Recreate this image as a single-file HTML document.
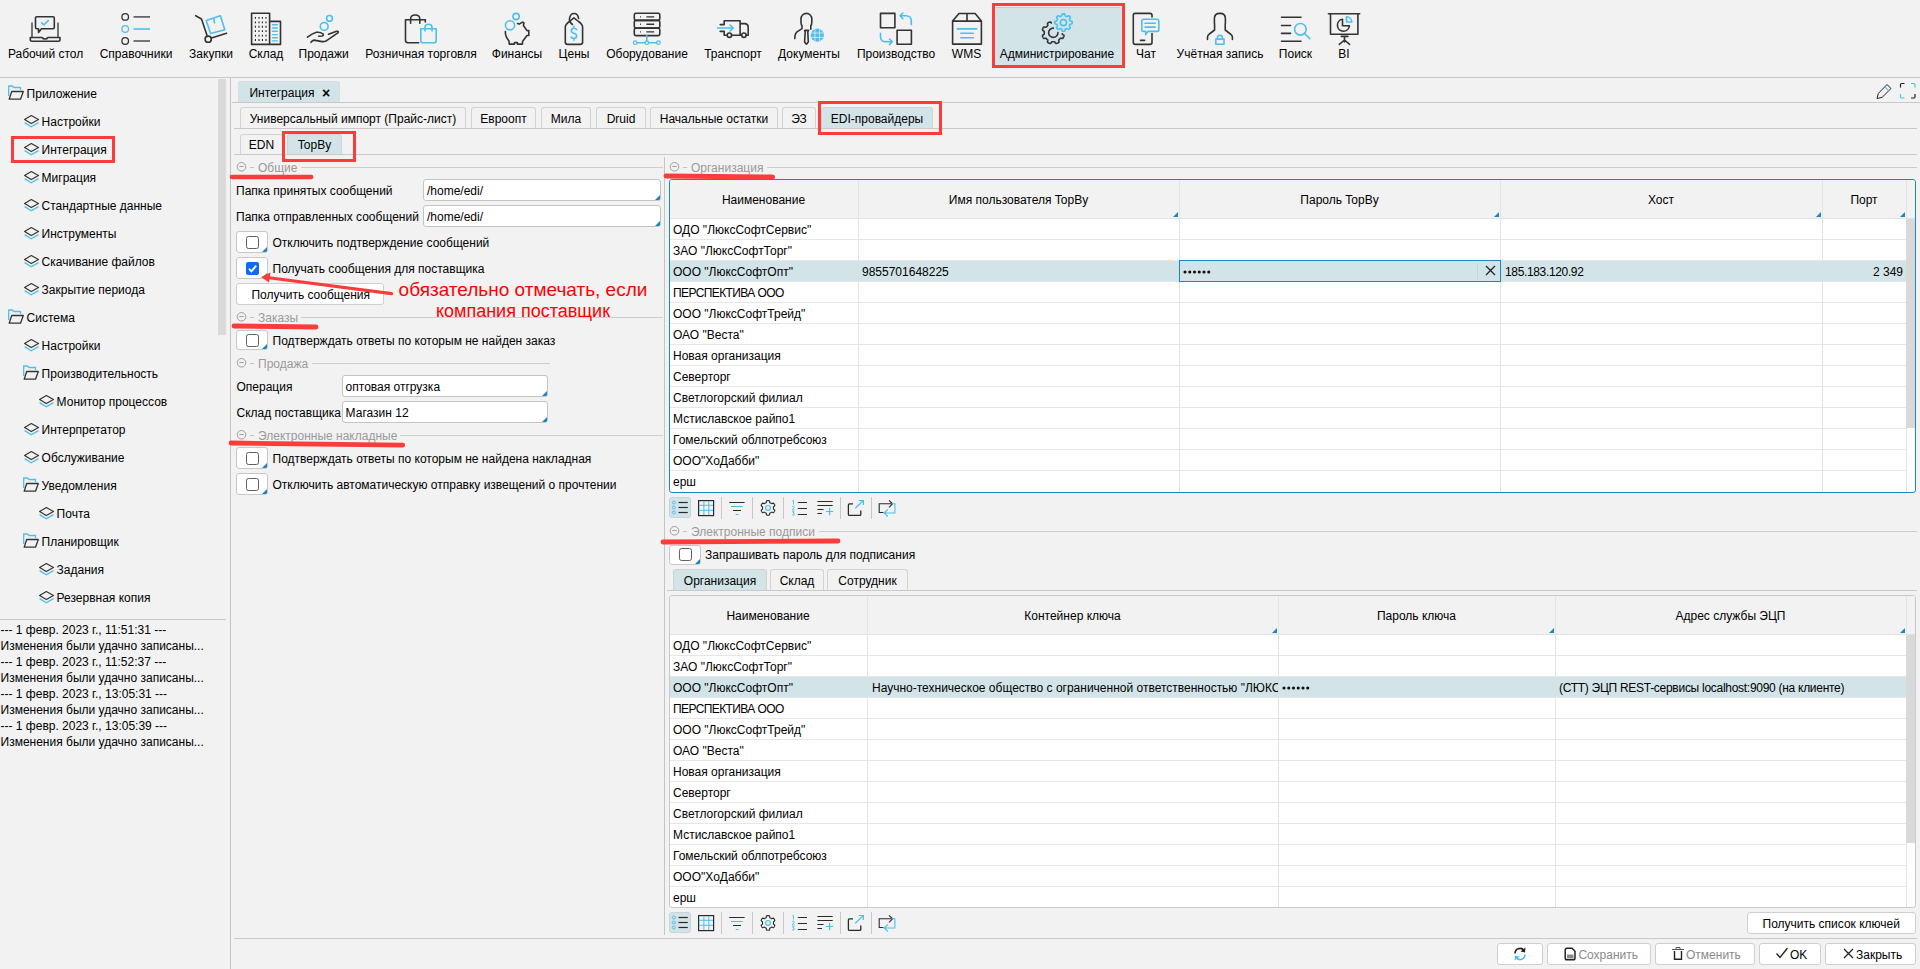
<!DOCTYPE html><html><head><meta charset="utf-8"><style>
html,body{margin:0;padding:0;width:1920px;height:969px;overflow:hidden;background:#f2f2f2;font-family:"Liberation Sans", sans-serif;}
.t{position:absolute;white-space:nowrap;}
.b{position:absolute;box-sizing:border-box;}
</style></head><body>
<div class="b" style="left:0px;top:77px;width:1920px;height:1px;background:#c8c8c8"></div>
<div class="b" style="left:994px;top:7px;width:128px;height:58px;background:#d3e4e9;border-radius:3px;border-top:1px solid #bfcdd2"></div>
<svg class="b" style="left:0;top:0" width="1400" height="60" viewBox="0 0 1400 60" fill="none"><path d="M32 22.5 V37.5 M58 22.5 V37.5" stroke="#555" stroke-width="1.6"/><path d="M30.3 37.5 H42 Q43 39 45 39 Q47 39 48 37.5 H60 V39.5 Q60 41.2 58.3 41.2 H32 Q30.3 41.2 30.3 39.5 Z" stroke="#333" stroke-width="1.6" fill="none" stroke-linejoin="round" stroke-linecap="round" stroke-width="1.4"/><path d="M36.8 16.7 H53 Q54.3 16.7 54.3 18 V27.5 Q54.3 28.8 53 28.8 H41.5 L38.5 32.5 V28.8 H36.8 Q35.5 28.8 35.5 27.5 V18 Q35.5 16.7 36.8 16.7 Z" stroke="#333" stroke-width="1.6" fill="none" stroke-linejoin="round" stroke-linecap="round" stroke-width="1.4"/><path d="M41.6 22.8 L43.9 24.9 L48.3 20.5" stroke="#4dbfee" stroke-width="1.6" fill="none" stroke-linejoin="round" stroke-linecap="round" stroke-width="1.3"/><circle cx="125.2" cy="16.9" r="3.3" stroke="#333" stroke-width="1.3"/><path d="M133.5 16.9 H150" stroke="#555" stroke-width="1.6"/><circle cx="125.2" cy="29" r="3.3" stroke="#4dbfee" stroke-width="1.3"/><path d="M133.5 29 H150" stroke="#4dbfee" stroke-width="1.6"/><circle cx="125.2" cy="41" r="3.3" stroke="#333" stroke-width="1.3"/><path d="M133.5 41 H150" stroke="#555" stroke-width="1.6"/><path d="M195.7 15.7 L201.5 19 L207.2 36" stroke="#333" stroke-width="1.6" fill="none" stroke-linejoin="round" stroke-linecap="round"/><circle cx="208.2" cy="39.2" r="3.1" stroke="#333" stroke-width="1.6" fill="none" stroke-linejoin="round" stroke-linecap="round"/><path d="M211.4 37.9 L226.5 33.3" stroke="#333" stroke-width="1.6" fill="none" stroke-linejoin="round" stroke-linecap="round"/><path d="M206.2 20.6 L220.4 15.7 L224.8 29.8 L210.6 33.6 Z" stroke="#4dbfee" stroke-width="1.6" fill="none" stroke-linejoin="round" stroke-linecap="round"/><path d="M213.6 18.7 L214.6 22.8" stroke="#4dbfee" stroke-width="1.6" fill="none" stroke-linejoin="round" stroke-linecap="round"/><path d="M251.6 13.3 H269.6 V44.4 H251.6 Z M269.6 21.4 H280.5 V44.4 H269.6" stroke="#333" stroke-width="1.6" fill="none" stroke-linejoin="round" stroke-linecap="round" stroke-width="1.7"/><path d="M255.4 17.0 V18.799999999999997 M259 17.0 V18.799999999999997 M262.4 17.0 V18.799999999999997 M266 17.0 V18.799999999999997 M255.4 21.400000000000002 V23.2 M259 21.400000000000002 V23.2 M262.4 21.400000000000002 V23.2 M266 21.400000000000002 V23.2 M255.4 25.85 V27.65 M259 25.85 V27.65 M262.4 25.85 V27.65 M266 25.85 V27.65 M255.4 30.3 V32.1 M259 30.3 V32.1 M262.4 30.3 V32.1 M266 30.3 V32.1 M255.4 34.7 V36.5 M259 34.7 V36.5 M262.4 34.7 V36.5 M266 34.7 V36.5 M255.4 39.1 V40.9 M259 39.1 V40.9 M262.4 39.1 V40.9 M266 39.1 V40.9 " stroke="#222" stroke-width="1.1"/><path d="M272.5 24.7 H277.3 M272.5 28 H277.3 M272.5 31.3 H277.3 M272.5 34.6 H277.3 M272.5 37.8 H277.3 M272.5 40.9 H277.3 " stroke="#4dbfee" stroke-width="1.4" stroke-linecap="round"/><circle cx="329.5" cy="18.4" r="2.9" stroke="#4dbfee" stroke-width="1.6" fill="none" stroke-linejoin="round" stroke-linecap="round" stroke-width="1.4"/><circle cx="324.2" cy="26.4" r="3.9" stroke="#4dbfee" stroke-width="1.6" fill="none" stroke-linejoin="round" stroke-linecap="round" stroke-width="1.4"/><path d="M307.5 37.2 Q312 33.5 316.5 32.3 Q320 31.8 323 33.8 Q324 35.5 322 36 L318.7 36.3" stroke="#333" stroke-width="1.6" fill="none" stroke-linejoin="round" stroke-linecap="round" stroke-width="1.4"/><path d="M328.5 34.2 L336.5 31.2 Q338.6 31 338.2 32.6 L325.5 41.3 Q324 41.8 322 41.6 L314 40.1 Q312.5 40.3 311 42.3" stroke="#333" stroke-width="1.6" fill="none" stroke-linejoin="round" stroke-linecap="round" stroke-width="1.4"/><path d="M418.7 42.8 H408 Q405.5 42.8 405.5 40.3 V19.8 H425.3 V22" stroke="#333" stroke-width="1.6" fill="none" stroke-linejoin="round" stroke-linecap="round" stroke-width="1.5"/><path d="M410.6 23.3 V19 Q410.6 15 415.2 15 Q419.8 15 419.8 19 V23.3" stroke="#333" stroke-width="1.6" fill="none" stroke-linejoin="round" stroke-linecap="round" stroke-width="1.5"/><path d="M420.8 28.8 H436.2 V40.5 Q436.2 42.8 434 42.8 H423 Q420.8 42.8 420.8 40.5 Z" stroke="#4dbfee" stroke-width="1.6" fill="none" stroke-linejoin="round" stroke-linecap="round" stroke-width="1.5"/><path d="M425 31 V27.5 Q425 24.2 428.5 24.2 Q432 24.2 432 27.5 V31" stroke="#4dbfee" stroke-width="1.6" fill="none" stroke-linejoin="round" stroke-linecap="round" stroke-width="1.5"/><circle cx="516.1" cy="16.5" r="3.1" stroke="#4dbfee" stroke-width="1.6" fill="none" stroke-linejoin="round" stroke-linecap="round" stroke-width="1.2"/><circle cx="510" cy="25.3" r="4.6" stroke="#4dbfee" stroke-width="1.6" fill="none" stroke-linejoin="round" stroke-linecap="round" stroke-width="1.3"/><path d="M505.3 31.5 Q505.3 37 509 41 L509.3 44.1 H514.5 V42.5 H517.3 V44.1 H522.5 V41.4 L527 35.5 H528.8 V30.6 H527 L523.5 25.7 L523.9 22.8 Q523.5 22.2 522 22.4 L519.2 24.1 L517.5 23.5" stroke="#333" stroke-width="1.6" fill="none" stroke-linejoin="round" stroke-linecap="round" stroke-width="1.3"/><path d="M569.5 21.5 L573.9 17.8 L578.5 21.5 Q582.6 24.5 582.6 27 V42 Q582.6 44.4 580.2 44.4 H567.7 Q565.3 44.4 565.3 42 V27 Q565.3 24.5 569.5 21.5 Z" stroke="#333" stroke-width="1.6" fill="none" stroke-linejoin="round" stroke-linecap="round" stroke-width="1.6"/><path d="M572.5 24.5 Q569 22 569.5 18.5 Q570.3 13.5 574 13.5 Q578 13.5 578.6 18.5" stroke="#333" stroke-width="1.6" fill="none" stroke-linejoin="round" stroke-linecap="round" stroke-width="1.5"/><path d="M576.8 29.6 Q575.8 28.2 573.9 28.2 Q571.3 28.2 571.3 30.6 Q571.3 32.6 573.9 33.2 Q576.6 33.8 576.6 36 Q576.6 38.4 573.9 38.4 Q571.8 38.4 571 37 M573.9 26.3 V28.2 M573.9 38.4 V40.3" stroke="#4dbfee" stroke-width="1.6" fill="none" stroke-linejoin="round" stroke-linecap="round" stroke-width="1.5"/><rect x="634.3" y="13.3" width="25.5" height="7.099999999999998" rx="1.6" stroke="#333" stroke-width="1.6" fill="none" stroke-linejoin="round" stroke-linecap="round" stroke-width="1.6"/><path d="M640 16.85 H640.9 M646.4 16.85 H654.2" stroke="#333" stroke-width="1.3"/><rect x="634.3" y="20.4" width="25.5" height="7.700000000000003" rx="1.6" stroke="#333" stroke-width="1.6" fill="none" stroke-linejoin="round" stroke-linecap="round" stroke-width="1.6"/><path d="M640 24.25 H640.9 M646.4 24.25 H654.2" stroke="#333" stroke-width="1.3"/><rect x="634.3" y="28.1" width="25.5" height="7.5" rx="1.6" stroke="#333" stroke-width="1.6" fill="none" stroke-linejoin="round" stroke-linecap="round" stroke-width="1.6"/><path d="M640 31.85 H640.9 M646.4 31.85 H654.2" stroke="#333" stroke-width="1.3"/><path d="M637 42.7 H644.9 M648.7 42.7 H656.6 M646.8 35.6 V40.8" stroke="#4dbfee" stroke-width="1.6" fill="none" stroke-linejoin="round" stroke-linecap="round" stroke-width="1.3"/><circle cx="635.2" cy="42.7" r="1.8" stroke="#4dbfee" stroke-width="1.2"/><circle cx="646.8" cy="42.7" r="1.8" stroke="#4dbfee" stroke-width="1.2"/><circle cx="658.4" cy="42.7" r="1.8" stroke="#4dbfee" stroke-width="1.2"/><path d="M720.2 24.6 H724.2 V20.8 H740.1 V35.2 M740.1 23.6 H744.5 Q748.2 23.6 748.2 27.4 V35.2 H746.2 M720.2 31.4 H724.2 V35.2 H727 M731.7 35.2 H741.5" stroke="#333" stroke-width="1.6" fill="none" stroke-linejoin="round" stroke-linecap="round" stroke-width="1.5"/><circle cx="729.4" cy="35.2" r="2.2" stroke="#333" stroke-width="1.6" fill="none" stroke-linejoin="round" stroke-linecap="round" stroke-width="1.5"/><circle cx="743.9" cy="35.2" r="2.2" stroke="#333" stroke-width="1.6" fill="none" stroke-linejoin="round" stroke-linecap="round" stroke-width="1.5"/><path d="M717.5 28 H733 M730 25 L733.3 28 L730 31" stroke="#4dbfee" stroke-width="1.6" fill="none" stroke-linejoin="round" stroke-linecap="round" stroke-width="1.7"/><path d="M802 28.6 V25.5 Q801 24.5 801 22.5 V18.8 A5.4 5.4 0 0 1 811.8 18.8 V22.5 Q811.8 24.5 810.8 25.5 V29.3 M802 28.6 L797 31.8 Q794.8 33.5 794.8 38.6" stroke="#333" stroke-width="1.6" fill="none" stroke-linejoin="round" stroke-linecap="round" stroke-width="1.5"/><path d="M804.6 30.4 L808.6 30.4 L807.8 32 L808.3 42 L806.4 44.2 L804.6 42 L805.2 32 Z" stroke="#333" stroke-width="1.6" fill="none" stroke-linejoin="round" stroke-linecap="round" stroke-width="1.3"/><circle cx="817.3" cy="35.2" r="6.6" fill="#4dbfee"/><path d="M811 33 H823.6 M811 37.4 H823.6 M815 29 V41.5 M819.6 29 V41.5" stroke="#f2f2f2" stroke-width="0.7"/><rect x="880.5" y="13.4" width="14.4" height="14.3" stroke="#333" stroke-width="1.6" fill="none" stroke-linejoin="round" stroke-linecap="round" stroke-width="1.6"/><rect x="897.1" y="30.2" width="14.3" height="14" stroke="#333" stroke-width="1.6" fill="none" stroke-linejoin="round" stroke-linecap="round" stroke-width="1.6"/><path d="M911.3 24.6 V21 Q911.3 15.8 905.7 15.8 H900 M902.8 13 L900 15.8 L902.8 18.6" stroke="#4dbfee" stroke-width="1.6" fill="none" stroke-linejoin="round" stroke-linecap="round" stroke-width="1.5"/><path d="M880.5 33.3 V36.5 Q880.5 41.8 886 41.8 H892.2 M889.5 39 L892.3 41.8 L889.5 44.6" stroke="#4dbfee" stroke-width="1.6" fill="none" stroke-linejoin="round" stroke-linecap="round" stroke-width="1.5"/><path d="M952.6 21.1 L959 13.5 H975.1 L981.4 21.1 V44.1 H952.6 Z M952.6 21.1 H981.4 M967 13.5 V21.1" stroke="#333" stroke-width="1.6" fill="none" stroke-linejoin="round" stroke-linecap="round" stroke-width="1.6"/><path d="M957.3 28.9 H976.7 M960.8 33.3 H973.3 M960.8 37.7 H973.3" stroke="#4dbfee" stroke-width="1.6" fill="none" stroke-linejoin="round" stroke-linecap="round" stroke-width="1.6"/><path d="M1062.22 33.69 L1062.24 33.95 L1062.39 34.22 L1062.91 34.58 L1063.63 35.02 L1063.97 35.40 L1064.00 35.73 L1063.95 36.03 L1063.86 36.33 L1063.76 36.62 L1063.65 36.91 L1063.53 37.20 L1063.40 37.48 L1063.26 37.76 L1063.11 38.03 L1062.93 38.28 L1062.66 38.47 L1062.10 38.47 L1061.27 38.26 L1060.70 38.17 L1060.42 38.28 L1060.24 38.45 L1060.07 38.63 L1059.90 38.82 L1059.73 39.00 L1059.55 39.17 L1059.38 39.34 L1059.19 39.51 L1059.01 39.68 L1058.83 39.86 L1058.69 40.09 L1058.70 40.54 L1058.91 41.34 L1059.00 42.02 L1058.85 42.36 L1058.61 42.56 L1058.35 42.72 L1058.07 42.86 L1057.79 42.99 L1057.51 43.11 L1057.22 43.22 L1056.93 43.33 L1056.63 43.42 L1056.33 43.49 L1056.01 43.50 L1055.65 43.29 L1055.22 42.66 L1054.83 42.01 L1054.53 41.76 L1054.27 41.72 L1054.03 41.72 L1053.78 41.74 L1053.53 41.75 L1053.28 41.75 L1053.03 41.75 L1052.78 41.74 L1052.54 41.73 L1052.29 41.72 L1052.03 41.74 L1051.75 41.92 L1051.38 42.47 L1050.95 43.18 L1050.57 43.48 L1050.24 43.50 L1049.94 43.44 L1049.65 43.35 L1049.35 43.25 L1049.06 43.14 L1048.78 43.02 L1048.50 42.89 L1048.22 42.75 L1047.95 42.60 L1047.70 42.42 L1047.52 42.13 L1047.54 41.54 L1047.76 40.71 L1047.82 40.17 L1047.71 39.91 L1047.54 39.72 L1047.35 39.55 L1047.17 39.39 L1046.99 39.22 L1046.81 39.04 L1046.64 38.86 L1046.47 38.68 L1046.31 38.49 L1046.13 38.32 L1045.88 38.19 L1045.40 38.21 L1044.59 38.43 L1043.94 38.49 L1043.62 38.33 L1043.43 38.09 L1043.27 37.82 L1043.13 37.55 L1043.00 37.27 L1042.88 36.98 L1042.77 36.69 L1042.66 36.40 L1042.57 36.11 L1042.51 35.81 L1042.51 35.49 L1042.74 35.12 L1043.40 34.69 L1044.03 34.30 L1044.24 34.01 L1044.28 33.75 L1044.27 33.50 L1044.26 33.26 L1044.25 33.01 L1044.25 32.76 L1044.25 32.51 L1044.26 32.26 L1044.27 32.01 L1044.28 31.77 L1044.25 31.51 L1044.06 31.22 L1043.46 30.85 L1042.78 30.41 L1042.51 30.04 L1042.50 29.72 L1042.57 29.42 L1042.66 29.12 L1042.76 28.83 L1042.87 28.54 L1042.99 28.26 L1043.12 27.98 L1043.26 27.70 L1043.41 27.43 L1043.60 27.18 L1043.91 27.01 L1044.53 27.05 L1045.35 27.27 L1045.86 27.32 L1046.11 27.20 L1046.29 27.02 L1046.46 26.84 L1046.63 26.65 L1046.80 26.47 L1046.97 26.30 L1047.15 26.13 L1047.34 25.96 L1047.52 25.79 L1047.70 25.61 L1047.82 25.36 L1047.77 24.85 L1047.55 24.02 L1047.51 23.41 L1047.68 23.10 L1047.93 22.91 L1048.20 22.76 L1048.48 22.62 L1048.76 22.49 L1049.04 22.37 L1049.33 22.26 L1049.62 22.16 L1049.92 22.07 L1050.22 22.00 L1050.54 22.01 L1050.91 22.28 L1051.35 22.97" stroke="#333" stroke-width="1.6" fill="none" stroke-linejoin="round" stroke-linecap="round" stroke-width="1.4"/><path d="M1053.4 28.1 A4.65 4.65 0 1 0 1057.9 32.6" stroke="#333" stroke-width="1.6" fill="none" stroke-linejoin="round" stroke-linecap="round" stroke-width="1.4"/><path d="M1072.15 22.55 L1072.14 22.89 L1072.12 23.23 L1072.05 23.57 L1071.82 23.88 L1071.05 24.06 L1070.28 24.19 L1070.03 24.41 L1069.92 24.65 L1069.83 24.90 L1069.73 25.15 L1069.63 25.40 L1069.52 25.64 L1069.42 25.89 L1069.44 26.22 L1069.89 26.86 L1070.30 27.53 L1070.25 27.91 L1070.06 28.20 L1069.84 28.45 L1069.60 28.70 L1069.35 28.94 L1069.10 29.16 L1068.81 29.35 L1068.43 29.40 L1067.76 28.99 L1067.12 28.54 L1066.79 28.52 L1066.54 28.62 L1066.30 28.73 L1066.05 28.83 L1065.80 28.93 L1065.55 29.02 L1065.31 29.13 L1065.09 29.38 L1064.96 30.15 L1064.78 30.92 L1064.47 31.15 L1064.13 31.22 L1063.79 31.24 L1063.45 31.25 L1063.11 31.24 L1062.77 31.22 L1062.43 31.15 L1062.12 30.92 L1061.94 30.15 L1061.81 29.38 L1061.59 29.13 L1061.35 29.02 L1061.10 28.93 L1060.85 28.83 L1060.60 28.73 L1060.36 28.62 L1060.11 28.52 L1059.78 28.54 L1059.14 28.99 L1058.47 29.40 L1058.09 29.35 L1057.80 29.16 L1057.55 28.94 L1057.30 28.70 L1057.06 28.45 L1056.84 28.20 L1056.65 27.91 L1056.60 27.53 L1057.01 26.86 L1057.46 26.22 L1057.48 25.89 L1057.38 25.64 L1057.27 25.40 L1057.17 25.15 L1057.07 24.90 L1056.98 24.65 L1056.87 24.41 L1056.62 24.19 L1055.85 24.06 L1055.08 23.88 L1054.85 23.57 L1054.78 23.23 L1054.76 22.89 L1054.75 22.55 L1054.76 22.21 L1054.78 21.87 L1054.85 21.53 L1055.08 21.22 L1055.85 21.04 L1056.62 20.91 L1056.87 20.69 L1056.98 20.45 L1057.07 20.20 L1057.17 19.95 L1057.27 19.70 L1057.38 19.46 L1057.48 19.21 L1057.46 18.88 L1057.01 18.24 L1056.60 17.57 L1056.65 17.19 L1056.84 16.90 L1057.06 16.65 L1057.30 16.40 L1057.55 16.16 L1057.80 15.94 L1058.09 15.75 L1058.47 15.70 L1059.14 16.11 L1059.78 16.56 L1060.11 16.58 L1060.36 16.48 L1060.60 16.37 L1060.85 16.27 L1061.10 16.17 L1061.35 16.08 L1061.59 15.97 L1061.81 15.72 L1061.94 14.95 L1062.12 14.18 L1062.43 13.95 L1062.77 13.88 L1063.11 13.86 L1063.45 13.85 L1063.79 13.86 L1064.13 13.88 L1064.47 13.95 L1064.78 14.18 L1064.96 14.95 L1065.09 15.72 L1065.31 15.97 L1065.55 16.08 L1065.80 16.17 L1066.05 16.27 L1066.30 16.37 L1066.54 16.48 L1066.79 16.58 L1067.12 16.56 L1067.76 16.11 L1068.43 15.70 L1068.81 15.75 L1069.10 15.94 L1069.35 16.16 L1069.60 16.40 L1069.84 16.65 L1070.06 16.90 L1070.25 17.19 L1070.30 17.57 L1069.89 18.24 L1069.44 18.88 L1069.42 19.21 L1069.52 19.46 L1069.63 19.70 L1069.73 19.95 L1069.83 20.20 L1069.92 20.45 L1070.03 20.69 L1070.28 20.91 L1071.05 21.04 L1071.82 21.22 L1072.05 21.53 L1072.12 21.87 L1072.14 22.21 L1072.15 22.55 Z" stroke="#4dbfee" stroke-width="1.6" fill="none" stroke-linejoin="round" stroke-linecap="round" stroke-width="1.2"/><circle cx="1063.45" cy="22.55" r="3.1" stroke="#4dbfee" stroke-width="1.6" fill="none" stroke-linejoin="round" stroke-linecap="round" stroke-width="1.2"/><path d="M1152 16.9 V15.3 Q1152 13.4 1150 13.4 H1135.3 Q1133.3 13.4 1133.3 15.3 V42.5 Q1133.3 44.4 1135.3 44.4 H1150 Q1152 44.4 1152 42.5 V33.5 M1140.5 40.4 H1144.6" stroke="#333" stroke-width="1.6" fill="none" stroke-linejoin="round" stroke-linecap="round" stroke-width="1.6"/><path d="M1143.5 19.3 H1157 Q1158.8 19.3 1158.8 21 V29.7 Q1158.8 31.4 1157 31.4 H1148 L1145.7 34.6 V31.4 H1143.5 Q1141.8 31.4 1141.8 29.7 V21 Q1141.8 19.3 1143.5 19.3 Z" stroke="#4dbfee" stroke-width="1.6" fill="none" stroke-linejoin="round" stroke-linecap="round" stroke-width="1.5"/><path d="M1145 23.2 H1155.2 M1145 27.1 H1155.2" stroke="#4dbfee" stroke-width="1.6" fill="none" stroke-linejoin="round" stroke-linecap="round" stroke-width="1.4"/><path d="M1207.5 39.5 V37 Q1207.5 35 1210 33.5 L1214.6 30 V25 Q1214.4 24 1214.4 21 V18.5 Q1214.4 13.4 1219.9 13.4 Q1225.4 13.4 1225.4 18.5 V21 Q1225.4 24 1225.2 25 V30 L1229.8 33.5 Q1232.4 35 1232.4 37 V39.5" stroke="#333" stroke-width="1.6" fill="none" stroke-linejoin="round" stroke-linecap="round" stroke-width="1.5"/><rect x="1215.8" y="39.1" width="8.2" height="5.2" stroke="#4dbfee" stroke-width="1.6" fill="none" stroke-linejoin="round" stroke-linecap="round" stroke-width="1.4"/><path d="M1217.5 39 V37.5 Q1217.5 35.2 1219.9 35.2 Q1222.3 35.2 1222.3 37.5 V39" stroke="#4dbfee" stroke-width="1.6" fill="none" stroke-linejoin="round" stroke-linecap="round" stroke-width="1.4"/><path d="M1281.5 17.2 H1301 M1281.5 25.5 H1290.5 M1281.5 33.4 H1290.5 M1281.5 41.2 H1301" stroke="#333" stroke-width="1.6" fill="none" stroke-linejoin="round" stroke-linecap="round" stroke-width="1.5"/><circle cx="1300.4" cy="29.3" r="5.8" stroke="#4dbfee" stroke-width="1.6" fill="none" stroke-linejoin="round" stroke-linecap="round" stroke-width="1.5"/><path d="M1304.6 33.5 L1309.8 38.6" stroke="#4dbfee" stroke-width="1.6" fill="none" stroke-linejoin="round" stroke-linecap="round" stroke-width="1.5"/><path d="M1328.4 13.7 H1359.7 M1330.5 13.7 V34.2 H1357.9 V13.7 M1341.3 36.4 H1347.9 M1344.5 36.4 V42 M1339.3 44.3 L1344.5 40 L1349.6 44.3" stroke="#333" stroke-width="1.6" fill="none" stroke-linejoin="round" stroke-linecap="round" stroke-width="1.6"/><path d="M1342.5 19.3 A6 6 0 1 0 1349.4 25.8 H1342.5 Z" stroke="#333" stroke-width="1.6" fill="none" stroke-linejoin="round" stroke-linecap="round" stroke-width="1.5"/><path d="M1346.5 16.8 A5.5 5.5 0 0 1 1351.8 22 H1346.5 Z" stroke="#4dbfee" stroke-width="1.6" fill="none" stroke-linejoin="round" stroke-linecap="round" stroke-width="1.4"/></svg>
<div class="t" style="left:-254.4px;width:600px;text-align:center;top:47px;font-size:12px;line-height:14px;color:#000;">Рабочий стол</div>
<div class="t" style="left:-164px;width:600px;text-align:center;top:47px;font-size:12px;line-height:14px;color:#000;">Справочники</div>
<div class="t" style="left:-89px;width:600px;text-align:center;top:47px;font-size:12px;line-height:14px;color:#000;">Закупки</div>
<div class="t" style="left:-34px;width:600px;text-align:center;top:47px;font-size:12px;line-height:14px;color:#000;">Склад</div>
<div class="t" style="left:23.600000000000023px;width:600px;text-align:center;top:47px;font-size:12px;line-height:14px;color:#000;">Продажи</div>
<div class="t" style="left:121px;width:600px;text-align:center;top:47px;font-size:12px;line-height:14px;color:#000;">Розничная торговля</div>
<div class="t" style="left:217px;width:600px;text-align:center;top:47px;font-size:12px;line-height:14px;color:#000;">Финансы</div>
<div class="t" style="left:274px;width:600px;text-align:center;top:47px;font-size:12px;line-height:14px;color:#000;">Цены</div>
<div class="t" style="left:347px;width:600px;text-align:center;top:47px;font-size:12px;line-height:14px;color:#000;">Оборудование</div>
<div class="t" style="left:433px;width:600px;text-align:center;top:47px;font-size:12px;line-height:14px;color:#000;">Транспорт</div>
<div class="t" style="left:509px;width:600px;text-align:center;top:47px;font-size:12px;line-height:14px;color:#000;">Документы</div>
<div class="t" style="left:596px;width:600px;text-align:center;top:47px;font-size:12px;line-height:14px;color:#000;">Производство</div>
<div class="t" style="left:666.5px;width:600px;text-align:center;top:47px;font-size:12px;line-height:14px;color:#000;">WMS</div>
<div class="t" style="left:757px;width:600px;text-align:center;top:47px;font-size:12px;line-height:14px;color:#000;">Администрирование</div>
<div class="t" style="left:846px;width:600px;text-align:center;top:47px;font-size:12px;line-height:14px;color:#000;">Чат</div>
<div class="t" style="left:920px;width:600px;text-align:center;top:47px;font-size:12px;line-height:14px;color:#000;">Учётная запись</div>
<div class="t" style="left:995.5px;width:600px;text-align:center;top:47px;font-size:12px;line-height:14px;color:#000;">Поиск</div>
<div class="t" style="left:1044px;width:600px;text-align:center;top:47px;font-size:12px;line-height:14px;color:#000;">BI</div>
<div class="b" style="left:992px;top:3px;width:133px;height:65px;border:3px solid #fc3b3b"></div>
<div class="b" style="left:230px;top:78px;width:1px;height:891px;background:#c4c4c4"></div>
<div class="b" style="left:218px;top:79px;width:8px;height:256px;background:#d9d9d9"></div>
<div class="t" style="left:26.6px;top:87px;font-size:12px;line-height:14px;color:#000;">Приложение</div>
<svg class="b" style="left:8px;top:85px" width="16" height="16" viewBox="0 0 16 16" fill="none"><path d="M0.7 11 V1 H4.5 L5.8 2.5 H12.5 V5" stroke="#4dbfee" stroke-width="1.3"/><path d="M3.7 6.5 H15.3 L12.5 14.2 H1.2 Z" stroke="#333" stroke-width="1.3" stroke-linejoin="round"/></svg>
<div class="t" style="left:41.6px;top:115px;font-size:12px;line-height:14px;color:#000;">Настройки</div>
<svg class="b" style="left:23.5px;top:114px" width="16" height="14" viewBox="0 0 16 14" fill="none"><path d="M0.6 5.6 L7.3 1.6 L14.5 5.6 L7.3 9.6 Z" stroke="#333" stroke-width="1.2" stroke-linejoin="round"/><path d="M0.6 8.6 L7.3 12.8 L14.5 8.6" stroke="#4dbfee" stroke-width="1.3"/></svg>
<div class="t" style="left:41.6px;top:143px;font-size:12px;line-height:14px;color:#000;">Интеграция</div>
<svg class="b" style="left:23.5px;top:142px" width="16" height="14" viewBox="0 0 16 14" fill="none"><path d="M0.6 5.6 L7.3 1.6 L14.5 5.6 L7.3 9.6 Z" stroke="#333" stroke-width="1.2" stroke-linejoin="round"/><path d="M0.6 8.6 L7.3 12.8 L14.5 8.6" stroke="#4dbfee" stroke-width="1.3"/></svg>
<div class="t" style="left:41.6px;top:171px;font-size:12px;line-height:14px;color:#000;">Миграция</div>
<svg class="b" style="left:23.5px;top:170px" width="16" height="14" viewBox="0 0 16 14" fill="none"><path d="M0.6 5.6 L7.3 1.6 L14.5 5.6 L7.3 9.6 Z" stroke="#333" stroke-width="1.2" stroke-linejoin="round"/><path d="M0.6 8.6 L7.3 12.8 L14.5 8.6" stroke="#4dbfee" stroke-width="1.3"/></svg>
<div class="t" style="left:41.6px;top:199px;font-size:12px;line-height:14px;color:#000;">Стандартные данные</div>
<svg class="b" style="left:23.5px;top:198px" width="16" height="14" viewBox="0 0 16 14" fill="none"><path d="M0.6 5.6 L7.3 1.6 L14.5 5.6 L7.3 9.6 Z" stroke="#333" stroke-width="1.2" stroke-linejoin="round"/><path d="M0.6 8.6 L7.3 12.8 L14.5 8.6" stroke="#4dbfee" stroke-width="1.3"/></svg>
<div class="t" style="left:41.6px;top:227px;font-size:12px;line-height:14px;color:#000;">Инструменты</div>
<svg class="b" style="left:23.5px;top:226px" width="16" height="14" viewBox="0 0 16 14" fill="none"><path d="M0.6 5.6 L7.3 1.6 L14.5 5.6 L7.3 9.6 Z" stroke="#333" stroke-width="1.2" stroke-linejoin="round"/><path d="M0.6 8.6 L7.3 12.8 L14.5 8.6" stroke="#4dbfee" stroke-width="1.3"/></svg>
<div class="t" style="left:41.6px;top:255px;font-size:12px;line-height:14px;color:#000;">Скачивание файлов</div>
<svg class="b" style="left:23.5px;top:254px" width="16" height="14" viewBox="0 0 16 14" fill="none"><path d="M0.6 5.6 L7.3 1.6 L14.5 5.6 L7.3 9.6 Z" stroke="#333" stroke-width="1.2" stroke-linejoin="round"/><path d="M0.6 8.6 L7.3 12.8 L14.5 8.6" stroke="#4dbfee" stroke-width="1.3"/></svg>
<div class="t" style="left:41.6px;top:283px;font-size:12px;line-height:14px;color:#000;">Закрытие периода</div>
<svg class="b" style="left:23.5px;top:282px" width="16" height="14" viewBox="0 0 16 14" fill="none"><path d="M0.6 5.6 L7.3 1.6 L14.5 5.6 L7.3 9.6 Z" stroke="#333" stroke-width="1.2" stroke-linejoin="round"/><path d="M0.6 8.6 L7.3 12.8 L14.5 8.6" stroke="#4dbfee" stroke-width="1.3"/></svg>
<div class="t" style="left:26.6px;top:311px;font-size:12px;line-height:14px;color:#000;">Система</div>
<svg class="b" style="left:8px;top:309px" width="16" height="16" viewBox="0 0 16 16" fill="none"><path d="M0.7 11 V1 H4.5 L5.8 2.5 H12.5 V5" stroke="#4dbfee" stroke-width="1.3"/><path d="M3.7 6.5 H15.3 L12.5 14.2 H1.2 Z" stroke="#333" stroke-width="1.3" stroke-linejoin="round"/></svg>
<div class="t" style="left:41.6px;top:339px;font-size:12px;line-height:14px;color:#000;">Настройки</div>
<svg class="b" style="left:23.5px;top:338px" width="16" height="14" viewBox="0 0 16 14" fill="none"><path d="M0.6 5.6 L7.3 1.6 L14.5 5.6 L7.3 9.6 Z" stroke="#333" stroke-width="1.2" stroke-linejoin="round"/><path d="M0.6 8.6 L7.3 12.8 L14.5 8.6" stroke="#4dbfee" stroke-width="1.3"/></svg>
<div class="t" style="left:41.6px;top:367px;font-size:12px;line-height:14px;color:#000;">Производительность</div>
<svg class="b" style="left:23px;top:365px" width="16" height="16" viewBox="0 0 16 16" fill="none"><path d="M0.7 11 V1 H4.5 L5.8 2.5 H12.5 V5" stroke="#4dbfee" stroke-width="1.3"/><path d="M3.7 6.5 H15.3 L12.5 14.2 H1.2 Z" stroke="#333" stroke-width="1.3" stroke-linejoin="round"/></svg>
<div class="t" style="left:56.6px;top:395px;font-size:12px;line-height:14px;color:#000;">Монитор процессов</div>
<svg class="b" style="left:38.5px;top:394px" width="16" height="14" viewBox="0 0 16 14" fill="none"><path d="M0.6 5.6 L7.3 1.6 L14.5 5.6 L7.3 9.6 Z" stroke="#333" stroke-width="1.2" stroke-linejoin="round"/><path d="M0.6 8.6 L7.3 12.8 L14.5 8.6" stroke="#4dbfee" stroke-width="1.3"/></svg>
<div class="t" style="left:41.6px;top:423px;font-size:12px;line-height:14px;color:#000;">Интерпретатор</div>
<svg class="b" style="left:23.5px;top:422px" width="16" height="14" viewBox="0 0 16 14" fill="none"><path d="M0.6 5.6 L7.3 1.6 L14.5 5.6 L7.3 9.6 Z" stroke="#333" stroke-width="1.2" stroke-linejoin="round"/><path d="M0.6 8.6 L7.3 12.8 L14.5 8.6" stroke="#4dbfee" stroke-width="1.3"/></svg>
<div class="t" style="left:41.6px;top:451px;font-size:12px;line-height:14px;color:#000;">Обслуживание</div>
<svg class="b" style="left:23.5px;top:450px" width="16" height="14" viewBox="0 0 16 14" fill="none"><path d="M0.6 5.6 L7.3 1.6 L14.5 5.6 L7.3 9.6 Z" stroke="#333" stroke-width="1.2" stroke-linejoin="round"/><path d="M0.6 8.6 L7.3 12.8 L14.5 8.6" stroke="#4dbfee" stroke-width="1.3"/></svg>
<div class="t" style="left:41.6px;top:479px;font-size:12px;line-height:14px;color:#000;">Уведомления</div>
<svg class="b" style="left:23px;top:477px" width="16" height="16" viewBox="0 0 16 16" fill="none"><path d="M0.7 11 V1 H4.5 L5.8 2.5 H12.5 V5" stroke="#4dbfee" stroke-width="1.3"/><path d="M3.7 6.5 H15.3 L12.5 14.2 H1.2 Z" stroke="#333" stroke-width="1.3" stroke-linejoin="round"/></svg>
<div class="t" style="left:56.6px;top:507px;font-size:12px;line-height:14px;color:#000;">Почта</div>
<svg class="b" style="left:38.5px;top:506px" width="16" height="14" viewBox="0 0 16 14" fill="none"><path d="M0.6 5.6 L7.3 1.6 L14.5 5.6 L7.3 9.6 Z" stroke="#333" stroke-width="1.2" stroke-linejoin="round"/><path d="M0.6 8.6 L7.3 12.8 L14.5 8.6" stroke="#4dbfee" stroke-width="1.3"/></svg>
<div class="t" style="left:41.6px;top:535px;font-size:12px;line-height:14px;color:#000;">Планировщик</div>
<svg class="b" style="left:23px;top:533px" width="16" height="16" viewBox="0 0 16 16" fill="none"><path d="M0.7 11 V1 H4.5 L5.8 2.5 H12.5 V5" stroke="#4dbfee" stroke-width="1.3"/><path d="M3.7 6.5 H15.3 L12.5 14.2 H1.2 Z" stroke="#333" stroke-width="1.3" stroke-linejoin="round"/></svg>
<div class="t" style="left:56.6px;top:563px;font-size:12px;line-height:14px;color:#000;">Задания</div>
<svg class="b" style="left:38.5px;top:562px" width="16" height="14" viewBox="0 0 16 14" fill="none"><path d="M0.6 5.6 L7.3 1.6 L14.5 5.6 L7.3 9.6 Z" stroke="#333" stroke-width="1.2" stroke-linejoin="round"/><path d="M0.6 8.6 L7.3 12.8 L14.5 8.6" stroke="#4dbfee" stroke-width="1.3"/></svg>
<div class="t" style="left:56.6px;top:591px;font-size:12px;line-height:14px;color:#000;">Резервная копия</div>
<svg class="b" style="left:38.5px;top:590px" width="16" height="14" viewBox="0 0 16 14" fill="none"><path d="M0.6 5.6 L7.3 1.6 L14.5 5.6 L7.3 9.6 Z" stroke="#333" stroke-width="1.2" stroke-linejoin="round"/><path d="M0.6 8.6 L7.3 12.8 L14.5 8.6" stroke="#4dbfee" stroke-width="1.3"/></svg>
<div class="b" style="left:11px;top:136px;width:104px;height:27px;border:3px solid #fc3b3b"></div>
<div class="b" style="left:0px;top:619px;width:226px;height:1px;background:#c8c8c8"></div>
<div class="t" style="left:0.5px;top:623px;font-size:12px;line-height:14px;color:#000;">--- 1 февр. 2023 г., 11:51:31 ---</div>
<div class="t" style="left:0.5px;top:639px;font-size:12px;line-height:14px;color:#000;">Изменения были удачно записаны...</div>
<div class="t" style="left:0.5px;top:655px;font-size:12px;line-height:14px;color:#000;">--- 1 февр. 2023 г., 11:52:37 ---</div>
<div class="t" style="left:0.5px;top:671px;font-size:12px;line-height:14px;color:#000;">Изменения были удачно записаны...</div>
<div class="t" style="left:0.5px;top:687px;font-size:12px;line-height:14px;color:#000;">--- 1 февр. 2023 г., 13:05:31 ---</div>
<div class="t" style="left:0.5px;top:703px;font-size:12px;line-height:14px;color:#000;">Изменения были удачно записаны...</div>
<div class="t" style="left:0.5px;top:719px;font-size:12px;line-height:14px;color:#000;">--- 1 февр. 2023 г., 13:05:39 ---</div>
<div class="t" style="left:0.5px;top:735px;font-size:12px;line-height:14px;color:#000;">Изменения были удачно записаны...</div>
<div class="b" style="left:238px;top:81px;width:102px;height:22px;background:#d3e4e9;border:1px solid #d6dfe2;border-bottom:none;border-radius:3px 3px 0 0"></div>
<div class="t" style="left:249.4px;top:86px;font-size:12px;line-height:14px;color:#000;">Интеграция</div>
<div class="t" style="left:322px;top:86px;font-size:14px;line-height:14px;color:#000;font-weight:bold;">×</div>
<div class="b" style="left:232px;top:102px;width:1688px;height:1px;background:#c9c9c9"></div>
<svg class="b" style="left:1875px;top:82px" width="18" height="18" viewBox="0 0 18 18" fill="none"><path d="M2 16.5 L3.3 11.5 L12 2.5 L16 6.5 L7.2 15.3 Z" stroke="#222" stroke-width="1" stroke-linejoin="round"/><path d="M9.8 4.8 L13.8 8.8" stroke="#4dbfee" stroke-width="1.1"/></svg>
<svg class="b" style="left:1899px;top:82px" width="18" height="18" viewBox="0 0 18 18" fill="none"><path d="M1.5 5.5 V2.8 Q1.5 1.5 2.8 1.5 H5.5" stroke="#222" stroke-width="1.2"/><path d="M12 1.5 H14.7 Q16 1.5 16 2.8 V5.5" stroke="#4dbfee" stroke-width="1.2"/><path d="M1.5 12 V14.7 Q1.5 16 2.8 16 H5.5" stroke="#4dbfee" stroke-width="1.2"/><path d="M12 16 H14.7 Q16 16 16 14.7 V12" stroke="#222" stroke-width="1.2"/></svg>
<div class="b" style="left:240px;top:107px;width:226px;height:22px;background:#f2f2f2;border:1px solid #d2d2d2;border-bottom:none;border-radius:3px 3px 0 0"></div>
<div class="t" style="left:53.0px;width:600px;text-align:center;top:112px;font-size:12px;line-height:14px;color:#000;">Универсальный импорт (Прайс-лист)</div>
<div class="b" style="left:471px;top:107px;width:65px;height:22px;background:#f2f2f2;border:1px solid #d2d2d2;border-bottom:none;border-radius:3px 3px 0 0"></div>
<div class="t" style="left:203.5px;width:600px;text-align:center;top:112px;font-size:12px;line-height:14px;color:#000;">Евроопт</div>
<div class="b" style="left:541px;top:107px;width:50px;height:22px;background:#f2f2f2;border:1px solid #d2d2d2;border-bottom:none;border-radius:3px 3px 0 0"></div>
<div class="t" style="left:266.0px;width:600px;text-align:center;top:112px;font-size:12px;line-height:14px;color:#000;">Мила</div>
<div class="b" style="left:596px;top:107px;width:50px;height:22px;background:#f2f2f2;border:1px solid #d2d2d2;border-bottom:none;border-radius:3px 3px 0 0"></div>
<div class="t" style="left:321.0px;width:600px;text-align:center;top:112px;font-size:12px;line-height:14px;color:#000;">Druid</div>
<div class="b" style="left:650px;top:107px;width:128px;height:22px;background:#f2f2f2;border:1px solid #d2d2d2;border-bottom:none;border-radius:3px 3px 0 0"></div>
<div class="t" style="left:414.0px;width:600px;text-align:center;top:112px;font-size:12px;line-height:14px;color:#000;">Начальные остатки</div>
<div class="b" style="left:782px;top:107px;width:34px;height:22px;background:#f2f2f2;border:1px solid #d2d2d2;border-bottom:none;border-radius:3px 3px 0 0"></div>
<div class="t" style="left:499.0px;width:600px;text-align:center;top:112px;font-size:12px;line-height:14px;color:#000;">ЭЗ</div>
<div class="b" style="left:821px;top:107px;width:112px;height:22px;background:#d3e4e9;border:1px solid #d2d2d2;border-bottom:none;border-radius:3px 3px 0 0"></div>
<div class="t" style="left:577.0px;width:600px;text-align:center;top:112px;font-size:12px;line-height:14px;color:#000;">EDI-провайдеры</div>
<div class="b" style="left:234px;top:128px;width:1683px;height:1px;background:#c9c9c9"></div>
<div class="b" style="left:818px;top:101px;width:124px;height:34px;border:3px solid #fc3b3b"></div>
<div class="b" style="left:240px;top:134px;width:43px;height:21px;background:#f2f2f2;border:1px solid #d2d2d2;border-bottom:none;border-radius:3px 3px 0 0"></div>
<div class="t" style="left:-38.5px;width:600px;text-align:center;top:138px;font-size:12px;line-height:14px;color:#000;">EDN</div>
<div class="b" style="left:287px;top:134px;width:55px;height:21px;background:#d3e4e9;border:1px solid #d2d2d2;border-bottom:none;border-radius:3px 3px 0 0"></div>
<div class="t" style="left:14.5px;width:600px;text-align:center;top:138px;font-size:12px;line-height:14px;color:#000;">TopBy</div>
<div class="b" style="left:234px;top:154px;width:1683px;height:1px;background:#c9c9c9"></div>
<div class="b" style="left:282px;top:131px;width:74px;height:31px;border:3px solid #fc3b3b"></div>
<svg class="b" style="left:236px;top:161px" width="12" height="12" viewBox="0 0 12 12" fill="none"><circle cx="5.5" cy="5.8" r="4.3" stroke="#8a8a8a" stroke-width="0.8"/><path d="M3.3 5.5 H7.7" stroke="#8a8a8a" stroke-width="0.8"/></svg>
<div class="b" style="left:250px;top:167px;width:4px;height:1px;background:#c4c4c4"></div>
<div class="t" style="left:258px;top:161px;font-size:12px;line-height:14px;color:#9a9a9a;">Общие</div>
<div class="b" style="left:301px;top:167px;width:362px;height:1px;background:#cdcdcd"></div>
<div class="t" style="left:236px;top:184px;font-size:12px;line-height:14px;color:#000;">Папка принятых сообщений</div>
<div class="b" style="left:423px;top:179px;width:238px;height:22px;background:#fff;border:1px solid #c4c4c4;border-radius:3px"></div>
<svg class="b" style="left:655px;top:195px" width="5" height="5" viewBox="0 0 5 5" fill="none"><path d="M5 0 V3.5 Q5 5 3.5 5 H0 Z" fill="#1a87c4"/></svg>
<div class="t" style="left:427px;top:184px;font-size:12px;line-height:14px;color:#000;">/home/edi/</div>
<div class="t" style="left:236px;top:210px;font-size:12px;line-height:14px;color:#000;">Папка отправленных сообщений</div>
<div class="b" style="left:423px;top:205px;width:238px;height:22px;background:#fff;border:1px solid #c4c4c4;border-radius:3px"></div>
<svg class="b" style="left:655px;top:221px" width="5" height="5" viewBox="0 0 5 5" fill="none"><path d="M5 0 V3.5 Q5 5 3.5 5 H0 Z" fill="#1a87c4"/></svg>
<div class="t" style="left:427px;top:210px;font-size:12px;line-height:14px;color:#000;">/home/edi/</div>
<div class="b" style="left:236px;top:231px;width:32px;height:22px;background:#fff;border:1px solid #c8c8c8;border-radius:3px"></div>
<svg class="b" style="left:262px;top:247px" width="5" height="5" viewBox="0 0 5 5" fill="none"><path d="M5 0 V3.5 Q5 5 3.5 5 H0 Z" fill="#1a87c4"/></svg>
<div class="b" style="left:246px;top:236px;width:13px;height:13px;background:#fff;border:1.2px solid #606060;border-radius:2.5px"></div>
<div class="t" style="left:272.5px;top:236px;font-size:12px;line-height:14px;color:#000;">Отключить подтверждение сообщений</div>
<div class="b" style="left:236px;top:257px;width:32px;height:22px;background:#fff;border:1px solid #c8c8c8;border-radius:3px"></div>
<svg class="b" style="left:262px;top:273px" width="5" height="5" viewBox="0 0 5 5" fill="none"><path d="M5 0 V3.5 Q5 5 3.5 5 H0 Z" fill="#1a87c4"/></svg>
<div class="b" style="left:246px;top:262px;width:13px;height:13px;background:#0b6cfb;border-radius:2px"></div>
<svg class="b" style="left:246px;top:262px" width="13" height="13" viewBox="0 0 13 13" fill="none"><path d="M3 6.8 L5.5 9.3 L10.2 3.6" stroke="#fff" stroke-width="1.9" fill="none"/></svg>
<div class="t" style="left:272.5px;top:262px;font-size:12px;line-height:14px;color:#000;">Получать сообщения для поставщика</div>
<div class="b" style="left:236px;top:283px;width:148px;height:22px;background:#fff;border:1px solid #cfcfcf;border-radius:3px"></div>
<div class="t" style="left:251.4px;top:288px;font-size:12px;line-height:14px;color:#000;">Получить сообщения</div>
<svg class="b" style="left:236px;top:311px" width="12" height="12" viewBox="0 0 12 12" fill="none"><circle cx="5.5" cy="5.8" r="4.3" stroke="#8a8a8a" stroke-width="0.8"/><path d="M3.3 5.5 H7.7" stroke="#8a8a8a" stroke-width="0.8"/></svg>
<div class="b" style="left:250px;top:317px;width:4px;height:1px;background:#c4c4c4"></div>
<div class="t" style="left:258px;top:311px;font-size:12px;line-height:14px;color:#9a9a9a;">Заказы</div>
<div class="b" style="left:301px;top:317px;width:362px;height:1px;background:#cdcdcd"></div>
<div class="b" style="left:236px;top:330px;width:32px;height:20px;background:#fff;border:1px solid #c8c8c8;border-radius:3px"></div>
<svg class="b" style="left:262px;top:344px" width="5" height="5" viewBox="0 0 5 5" fill="none"><path d="M5 0 V3.5 Q5 5 3.5 5 H0 Z" fill="#1a87c4"/></svg>
<div class="b" style="left:246px;top:334px;width:13px;height:13px;background:#fff;border:1.2px solid #606060;border-radius:2.5px"></div>
<div class="t" style="left:272.5px;top:334px;font-size:12px;line-height:14px;color:#000;">Подтверждать ответы по которым не найден заказ</div>
<svg class="b" style="left:236px;top:357px" width="12" height="12" viewBox="0 0 12 12" fill="none"><circle cx="5.5" cy="5.8" r="4.3" stroke="#8a8a8a" stroke-width="0.8"/><path d="M3.3 5.5 H7.7" stroke="#8a8a8a" stroke-width="0.8"/></svg>
<div class="b" style="left:250px;top:363px;width:4px;height:1px;background:#c4c4c4"></div>
<div class="t" style="left:258px;top:357px;font-size:12px;line-height:14px;color:#9a9a9a;">Продажа</div>
<div class="b" style="left:312px;top:363px;width:238px;height:1px;background:#cdcdcd"></div>
<div class="t" style="left:236.5px;top:380px;font-size:12px;line-height:14px;color:#000;">Операция</div>
<div class="b" style="left:342px;top:375px;width:206px;height:22px;background:#fff;border:1px solid #c4c4c4;border-radius:3px"></div>
<svg class="b" style="left:542px;top:391px" width="5" height="5" viewBox="0 0 5 5" fill="none"><path d="M5 0 V3.5 Q5 5 3.5 5 H0 Z" fill="#1a87c4"/></svg>
<div class="t" style="left:345.6px;top:380px;font-size:12px;line-height:14px;color:#000;">оптовая отгрузка</div>
<div class="t" style="left:236.5px;top:406px;font-size:12px;line-height:14px;color:#000;">Склад поставщика</div>
<div class="b" style="left:342px;top:401px;width:206px;height:22px;background:#fff;border:1px solid #c4c4c4;border-radius:3px"></div>
<svg class="b" style="left:542px;top:417px" width="5" height="5" viewBox="0 0 5 5" fill="none"><path d="M5 0 V3.5 Q5 5 3.5 5 H0 Z" fill="#1a87c4"/></svg>
<div class="t" style="left:345.6px;top:406px;font-size:12px;line-height:14px;color:#000;">Магазин 12</div>
<svg class="b" style="left:236px;top:429px" width="12" height="12" viewBox="0 0 12 12" fill="none"><circle cx="5.5" cy="5.8" r="4.3" stroke="#8a8a8a" stroke-width="0.8"/><path d="M3.3 5.5 H7.7" stroke="#8a8a8a" stroke-width="0.8"/></svg>
<div class="b" style="left:250px;top:435px;width:4px;height:1px;background:#c4c4c4"></div>
<div class="t" style="left:258px;top:429px;font-size:12px;line-height:14px;color:#9a9a9a;">Электронные накладные</div>
<div class="b" style="left:400px;top:435px;width:263px;height:1px;background:#cdcdcd"></div>
<div class="b" style="left:236px;top:447px;width:32px;height:22px;background:#fff;border:1px solid #c8c8c8;border-radius:3px"></div>
<svg class="b" style="left:262px;top:463px" width="5" height="5" viewBox="0 0 5 5" fill="none"><path d="M5 0 V3.5 Q5 5 3.5 5 H0 Z" fill="#1a87c4"/></svg>
<div class="b" style="left:246px;top:452px;width:13px;height:13px;background:#fff;border:1.2px solid #606060;border-radius:2.5px"></div>
<div class="t" style="left:272.5px;top:452px;font-size:12px;line-height:14px;color:#000;">Подтверждать ответы по которым не найдена накладная</div>
<div class="b" style="left:236px;top:473px;width:32px;height:22px;background:#fff;border:1px solid #c8c8c8;border-radius:3px"></div>
<svg class="b" style="left:262px;top:489px" width="5" height="5" viewBox="0 0 5 5" fill="none"><path d="M5 0 V3.5 Q5 5 3.5 5 H0 Z" fill="#1a87c4"/></svg>
<div class="b" style="left:246px;top:478px;width:13px;height:13px;background:#fff;border:1.2px solid #606060;border-radius:2.5px"></div>
<div class="t" style="left:272.5px;top:478px;font-size:12px;line-height:14px;color:#000;">Отключить автоматическую отправку извещений о прочтении</div>
<div class="t" style="left:373px;width:300px;text-align:center;top:279px;font-size:19px;line-height:22px;color:#ff0000">обязательно отмечать, если</div>
<div class="t" style="left:373px;width:300px;text-align:center;top:300px;font-size:18px;line-height:22px;color:#ff0000">компания поставщик</div>
<svg class="b" style="left:255px;top:269px" width="140" height="30" viewBox="0 0 140 30" fill="none"><path d="M136.5 24.7 L12 8.5" stroke="#fc3b3b" stroke-width="3.2" stroke-linecap="round"/><path d="M6 8 L15.5 3.5 L14 13.5 Z" fill="#fc3b3b"/></svg>
<div class="b" style="left:664px;top:157px;width:1px;height:778px;background:#c4c4c4"></div>
<svg class="b" style="left:669px;top:161px" width="12" height="12" viewBox="0 0 12 12" fill="none"><circle cx="5.5" cy="5.8" r="4.3" stroke="#8a8a8a" stroke-width="0.8"/><path d="M3.3 5.5 H7.7" stroke="#8a8a8a" stroke-width="0.8"/></svg>
<div class="b" style="left:683px;top:167px;width:4px;height:1px;background:#c4c4c4"></div>
<div class="t" style="left:691px;top:161px;font-size:12px;line-height:14px;color:#9a9a9a;">Организация</div>
<div class="b" style="left:767px;top:167px;width:1150px;height:1px;background:#cdcdcd"></div>
<div class="b" style="left:669px;top:179px;width:1247px;height:314px;background:#fff;border:1px solid #1a87c4;border-radius:3px"></div>
<div class="b" style="left:670px;top:180px;width:1245px;height:38px;background:#f2f2f2;border-radius:2px 2px 0 0"></div>
<div class="b" style="left:670px;top:218px;width:1245px;height:1px;background:#e2e2e2"></div>
<div class="b" style="left:858px;top:180px;width:1px;height:312px;background:#e4e4e4"></div>
<div class="b" style="left:1179px;top:180px;width:1px;height:312px;background:#e4e4e4"></div>
<div class="b" style="left:1500px;top:180px;width:1px;height:312px;background:#e4e4e4"></div>
<div class="b" style="left:1822px;top:180px;width:1px;height:312px;background:#e4e4e4"></div>
<div class="b" style="left:1906px;top:180px;width:1px;height:312px;background:#e4e4e4"></div>
<div class="t" style="left:463.5px;width:600px;text-align:center;top:193px;font-size:12px;line-height:14px;color:#000;">Наименование</div>
<div class="t" style="left:718.5px;width:600px;text-align:center;top:193px;font-size:12px;line-height:14px;color:#000;">Имя пользователя TopBy</div>
<svg class="b" style="left:1173px;top:212px" width="5" height="5" viewBox="0 0 5 5" fill="none"><path d="M5 0 V5 H0 Z" fill="#1a87c4"/></svg>
<div class="t" style="left:1039.5px;width:600px;text-align:center;top:193px;font-size:12px;line-height:14px;color:#000;">Пароль TopBy</div>
<svg class="b" style="left:1494px;top:212px" width="5" height="5" viewBox="0 0 5 5" fill="none"><path d="M5 0 V5 H0 Z" fill="#1a87c4"/></svg>
<div class="t" style="left:1361.0px;width:600px;text-align:center;top:193px;font-size:12px;line-height:14px;color:#000;">Хост</div>
<svg class="b" style="left:1816px;top:212px" width="5" height="5" viewBox="0 0 5 5" fill="none"><path d="M5 0 V5 H0 Z" fill="#1a87c4"/></svg>
<div class="t" style="left:1564.0px;width:600px;text-align:center;top:193px;font-size:12px;line-height:14px;color:#000;">Порт</div>
<svg class="b" style="left:1900px;top:212px" width="5" height="5" viewBox="0 0 5 5" fill="none"><path d="M5 0 V5 H0 Z" fill="#1a87c4"/></svg>
<div class="t" style="left:673px;top:223px;font-size:12px;line-height:14px;color:#000;">ОДО &quot;ЛюксСофтСервис&quot;</div>
<div class="b" style="left:670px;top:239px;width:1236px;height:1px;background:#e6e6e6"></div>
<div class="t" style="left:673px;top:244px;font-size:12px;line-height:14px;color:#000;">ЗАО &quot;ЛюксСофтТорг&quot;</div>
<div class="b" style="left:670px;top:260px;width:1236px;height:1px;background:#e6e6e6"></div>
<div class="b" style="left:670px;top:261px;width:1236px;height:20px;background:#d3e4e9"></div>
<div class="t" style="left:673px;top:265px;font-size:12px;line-height:14px;color:#000;">ООО &quot;ЛюксСофтОпт&quot;</div>
<div class="b" style="left:670px;top:281px;width:1236px;height:1px;background:#e6e6e6"></div>
<div class="t" style="left:673px;top:286px;font-size:12px;line-height:14px;color:#000;letter-spacing:-0.6px;">ПЕРСПЕКТИВА ООО</div>
<div class="b" style="left:670px;top:302px;width:1236px;height:1px;background:#e6e6e6"></div>
<div class="t" style="left:673px;top:307px;font-size:12px;line-height:14px;color:#000;">ООО &quot;ЛюксСофтТрейд&quot;</div>
<div class="b" style="left:670px;top:323px;width:1236px;height:1px;background:#e6e6e6"></div>
<div class="t" style="left:673px;top:328px;font-size:12px;line-height:14px;color:#000;">ОАО &quot;Веста&quot;</div>
<div class="b" style="left:670px;top:344px;width:1236px;height:1px;background:#e6e6e6"></div>
<div class="t" style="left:673px;top:349px;font-size:12px;line-height:14px;color:#000;">Новая организация</div>
<div class="b" style="left:670px;top:365px;width:1236px;height:1px;background:#e6e6e6"></div>
<div class="t" style="left:673px;top:370px;font-size:12px;line-height:14px;color:#000;">Северторг</div>
<div class="b" style="left:670px;top:386px;width:1236px;height:1px;background:#e6e6e6"></div>
<div class="t" style="left:673px;top:391px;font-size:12px;line-height:14px;color:#000;">Светлогорский филиал</div>
<div class="b" style="left:670px;top:407px;width:1236px;height:1px;background:#e6e6e6"></div>
<div class="t" style="left:673px;top:412px;font-size:12px;line-height:14px;color:#000;">Мстиславское райпо1</div>
<div class="b" style="left:670px;top:428px;width:1236px;height:1px;background:#e6e6e6"></div>
<div class="t" style="left:673px;top:433px;font-size:12px;line-height:14px;color:#000;">Гомельский облпотребсоюз</div>
<div class="b" style="left:670px;top:449px;width:1236px;height:1px;background:#e6e6e6"></div>
<div class="t" style="left:673px;top:454px;font-size:12px;line-height:14px;color:#000;">ООО&quot;ХоДабби&quot;</div>
<div class="b" style="left:670px;top:470px;width:1236px;height:1px;background:#e6e6e6"></div>
<div class="t" style="left:673px;top:475px;font-size:12px;line-height:14px;color:#000;">ерш</div>
<div class="b" style="left:1906px;top:219px;width:9px;height:209px;background:#d9d9d9"></div>
<div class="t" style="left:862px;top:265px;font-size:12px;line-height:14px;color:#000;">9855701648225</div>
<div class="b" style="left:1179px;top:260px;width:322px;height:22px;border:1px solid #1a87c4;background:#d3e4e9"></div>
<svg class="b" style="left:1183px;top:269px" width="30" height="6" viewBox="0 0 30 6" fill="none"><circle cx="2.0" cy="3" r="1.55" fill="#111"/><circle cx="6.75" cy="3" r="1.55" fill="#111"/><circle cx="11.5" cy="3" r="1.55" fill="#111"/><circle cx="16.25" cy="3" r="1.55" fill="#111"/><circle cx="21.0" cy="3" r="1.55" fill="#111"/><circle cx="25.75" cy="3" r="1.55" fill="#111"/></svg>
<div class="b" style="left:1477px;top:263px;width:1px;height:16px;background:#c8d4d8"></div>
<svg class="b" style="left:1485px;top:265px" width="11" height="11" viewBox="0 0 11 11" fill="none"><path d="M1 1 L10 10 M10 1 L1 10" stroke="#222" stroke-width="1.3"/></svg>
<div class="t" style="left:1505px;top:265px;font-size:12px;line-height:14px;color:#000;letter-spacing:-0.35px;">185.183.120.92</div>
<div class="t" style="left:1303px;width:600px;text-align:right;top:265px;font-size:12px;line-height:14px;color:#000;">2 349</div>
<div class="b" style="left:669px;top:497px;width:22px;height:21px;background:#d3e4e9;border:1px solid #c5d5da;border-radius:3px"></div>
<div class="b" style="left:721px;top:497px;width:1px;height:22px;background:#c8c8c8"></div>
<div class="b" style="left:752px;top:497px;width:1px;height:22px;background:#c8c8c8"></div>
<div class="b" style="left:783px;top:497px;width:1px;height:22px;background:#c8c8c8"></div>
<div class="b" style="left:840px;top:497px;width:1px;height:22px;background:#c8c8c8"></div>
<div class="b" style="left:871px;top:497px;width:1px;height:22px;background:#c8c8c8"></div>
<svg class="b" style="left:660px;top:492px" width="240" height="30" viewBox="660 492 240 30" fill="none"><circle cx="673.8" cy="502.5" r="1.5" stroke="#4dbfee" stroke-width="1"/><path d="M678.5 502.5 H687.8" stroke="#2a2a2a" stroke-width="1.2"/><circle cx="673.8" cy="507.5" r="1.5" stroke="#4dbfee" stroke-width="1"/><path d="M678.5 507.5 H687.8" stroke="#2a2a2a" stroke-width="1.2"/><circle cx="673.8" cy="512.5" r="1.5" stroke="#4dbfee" stroke-width="1"/><path d="M678.5 512.5 H687.8" stroke="#2a2a2a" stroke-width="1.2"/><rect x="698.6" y="500.6" width="15" height="15" stroke="#2a2a2a" stroke-width="1.2"/><path d="M703.9 501.2 V515 M708.8 501.2 V515 M699.2 505.3 H713 M699.2 510.3 H713" stroke="#4dbfee" stroke-width="1"/><path d="M729.3 502.5 H744.6 M733 510.5 H741" stroke="#2a2a2a" stroke-width="1.1"/><path d="M731 506.5 H742.7 M735.7 514.5 H738.4" stroke="#4dbfee" stroke-width="1.1"/><path d="M773.50 507.90 L773.49 508.19 L773.47 508.48 L773.45 508.76 L773.52 509.07 L774.18 509.56 L774.81 510.11 L774.80 510.51 L774.67 510.87 L774.50 511.21 L774.32 511.55 L774.12 511.88 L773.90 512.19 L773.66 512.48 L773.32 512.69 L772.53 512.43 L771.77 512.09 L771.47 512.19 L771.23 512.35 L771.00 512.51 L770.75 512.66 L770.50 512.80 L770.24 512.93 L769.98 513.05 L769.74 513.26 L769.66 514.08 L769.49 514.90 L769.14 515.09 L768.76 515.16 L768.38 515.19 L768.00 515.20 L767.62 515.19 L767.24 515.16 L766.86 515.09 L766.51 514.90 L766.34 514.08 L766.26 513.26 L766.02 513.05 L765.76 512.93 L765.50 512.80 L765.25 512.66 L765.00 512.51 L764.77 512.35 L764.53 512.19 L764.23 512.09 L763.47 512.43 L762.68 512.69 L762.34 512.48 L762.10 512.19 L761.88 511.88 L761.68 511.55 L761.50 511.21 L761.33 510.87 L761.20 510.51 L761.19 510.11 L761.82 509.56 L762.48 509.07 L762.55 508.76 L762.53 508.48 L762.51 508.19 L762.50 507.90 L762.51 507.61 L762.53 507.32 L762.55 507.04 L762.48 506.73 L761.82 506.24 L761.19 505.69 L761.20 505.29 L761.33 504.93 L761.50 504.59 L761.68 504.25 L761.88 503.92 L762.10 503.61 L762.34 503.32 L762.68 503.11 L763.47 503.37 L764.23 503.71 L764.53 503.61 L764.77 503.45 L765.00 503.29 L765.25 503.14 L765.50 503.00 L765.76 502.87 L766.02 502.75 L766.26 502.54 L766.34 501.72 L766.51 500.90 L766.86 500.71 L767.24 500.64 L767.62 500.61 L768.00 500.60 L768.38 500.61 L768.76 500.64 L769.14 500.71 L769.49 500.90 L769.66 501.72 L769.74 502.54 L769.98 502.75 L770.24 502.87 L770.50 503.00 L770.75 503.14 L771.00 503.29 L771.23 503.45 L771.47 503.61 L771.77 503.71 L772.53 503.37 L773.32 503.11 L773.66 503.32 L773.90 503.61 L774.12 503.92 L774.32 504.25 L774.50 504.59 L774.67 504.93 L774.80 505.29 L774.81 505.69 L774.18 506.24 L773.52 506.73 L773.45 507.04 L773.47 507.32 L773.49 507.61 L773.50 507.90 Z" stroke="#2a2a2a" stroke-width="1.1" stroke-linejoin="round"/><circle cx="768" cy="507.9" r="2.4" stroke="#4dbfee" stroke-width="1.2"/><path d="M792.2 501.2 L793.5 500.3 V504.5" stroke="#4dbfee" stroke-width="0.9"/><path d="M792 506.6 Q793.3 505.6 794.3 506.6 Q794.6 507.5 792 510 H794.5" stroke="#4dbfee" stroke-width="0.9"/><path d="M792 511.8 H794.2 L793 513 Q794.8 513.3 794.2 514.8 Q793.3 515.5 792 514.9" stroke="#4dbfee" stroke-width="0.9"/><path d="M797.8 502.5 H807 M797.8 508.5 H807 M797.8 514.5 H807" stroke="#2a2a2a" stroke-width="1.1"/><path d="M817.4 501.5 H832.7 M817.4 505.5 H832.7 M817.4 509.5 H823.5 M817.4 513.5 H822" stroke="#2a2a2a" stroke-width="1.1"/><path d="M829.6 507.8 V515.2 M825.9 511.5 H833.3" stroke="#4dbfee" stroke-width="1.2"/><path d="M853 503.9 H849.4 Q848.4 503.9 848.4 504.9 V514.4 Q848.4 515.4 849.4 515.4 H859.8 Q860.8 515.4 860.8 514.4 V510.5" stroke="#2a2a2a" stroke-width="1.3"/><path d="M855.3 508.2 L863.3 500.5 M858.8 500.5 H863.4 V505" stroke="#4dbfee" stroke-width="1.2"/><path d="M883.5 512.5 H879.2 V503.8 H892.5 M889 500.3 L892.6 503.8 L889 507.3" stroke="#2a2a2a" stroke-width="1.1"/><path d="M891.4 503.8 H894.9 V513 H884.3 M887.8 509.5 L884.2 513 L887.8 516.5" stroke="#4dbfee" stroke-width="1.1"/></svg>
<svg class="b" style="left:669px;top:525px" width="12" height="12" viewBox="0 0 12 12" fill="none"><circle cx="5.5" cy="5.8" r="4.3" stroke="#8a8a8a" stroke-width="0.8"/><path d="M3.3 5.5 H7.7" stroke="#8a8a8a" stroke-width="0.8"/></svg>
<div class="b" style="left:683px;top:531px;width:4px;height:1px;background:#c4c4c4"></div>
<div class="t" style="left:691px;top:525px;font-size:12px;line-height:14px;color:#9a9a9a;">Электронные подписи</div>
<div class="b" style="left:819px;top:531px;width:1098px;height:1px;background:#cdcdcd"></div>
<div class="b" style="left:669px;top:545px;width:32px;height:20px;background:#fff;border:1px solid #c8c8c8;border-radius:3px"></div>
<svg class="b" style="left:695px;top:559px" width="5" height="5" viewBox="0 0 5 5" fill="none"><path d="M5 0 V3.5 Q5 5 3.5 5 H0 Z" fill="#1a87c4"/></svg>
<div class="b" style="left:679px;top:548px;width:13px;height:13px;background:#fff;border:1.2px solid #606060;border-radius:2.5px"></div>
<div class="t" style="left:705px;top:548px;font-size:12px;line-height:14px;color:#000;">Запрашивать пароль для подписания</div>
<div class="b" style="left:673px;top:569px;width:94px;height:22px;background:#d3e4e9;border:1px solid #d2d2d2;border-bottom:none;border-radius:3px 3px 0 0"></div>
<div class="t" style="left:420.0px;width:600px;text-align:center;top:574px;font-size:12px;line-height:14px;color:#000;">Организация</div>
<div class="b" style="left:770px;top:569px;width:54px;height:22px;background:#f2f2f2;border:1px solid #d2d2d2;border-bottom:none;border-radius:3px 3px 0 0"></div>
<div class="t" style="left:497.0px;width:600px;text-align:center;top:574px;font-size:12px;line-height:14px;color:#000;">Склад</div>
<div class="b" style="left:827px;top:569px;width:81px;height:22px;background:#f2f2f2;border:1px solid #d2d2d2;border-bottom:none;border-radius:3px 3px 0 0"></div>
<div class="t" style="left:567.5px;width:600px;text-align:center;top:574px;font-size:12px;line-height:14px;color:#000;">Сотрудник</div>
<div class="b" style="left:667px;top:590px;width:1250px;height:1px;background:#c9c9c9"></div>
<div class="b" style="left:669px;top:595px;width:1247px;height:313px;background:#fff;border:1px solid #c9c9c9;border-radius:3px"></div>
<div class="b" style="left:670px;top:596px;width:1245px;height:38px;background:#f2f2f2;border-radius:2px 2px 0 0"></div>
<div class="b" style="left:670px;top:634px;width:1245px;height:1px;background:#e2e2e2"></div>
<div class="b" style="left:867px;top:596px;width:1px;height:311px;background:#e4e4e4"></div>
<div class="b" style="left:1278px;top:596px;width:1px;height:311px;background:#e4e4e4"></div>
<div class="b" style="left:1555px;top:596px;width:1px;height:311px;background:#e4e4e4"></div>
<div class="b" style="left:1906px;top:596px;width:1px;height:311px;background:#e4e4e4"></div>
<div class="t" style="left:468.0px;width:600px;text-align:center;top:609px;font-size:12px;line-height:14px;color:#000;">Наименование</div>
<div class="t" style="left:772.5px;width:600px;text-align:center;top:609px;font-size:12px;line-height:14px;color:#000;">Контейнер ключа</div>
<svg class="b" style="left:1272px;top:628px" width="5" height="5" viewBox="0 0 5 5" fill="none"><path d="M5 0 V5 H0 Z" fill="#1a87c4"/></svg>
<div class="t" style="left:1116.5px;width:600px;text-align:center;top:609px;font-size:12px;line-height:14px;color:#000;">Пароль ключа</div>
<svg class="b" style="left:1549px;top:628px" width="5" height="5" viewBox="0 0 5 5" fill="none"><path d="M5 0 V5 H0 Z" fill="#1a87c4"/></svg>
<div class="t" style="left:1430.5px;width:600px;text-align:center;top:609px;font-size:12px;line-height:14px;color:#000;">Адрес службы ЭЦП</div>
<svg class="b" style="left:1900px;top:628px" width="5" height="5" viewBox="0 0 5 5" fill="none"><path d="M5 0 V5 H0 Z" fill="#1a87c4"/></svg>
<div class="t" style="left:673px;top:639px;font-size:12px;line-height:14px;color:#000;">ОДО &quot;ЛюксСофтСервис&quot;</div>
<div class="b" style="left:670px;top:655px;width:1236px;height:1px;background:#e6e6e6"></div>
<div class="t" style="left:673px;top:660px;font-size:12px;line-height:14px;color:#000;">ЗАО &quot;ЛюксСофтТорг&quot;</div>
<div class="b" style="left:670px;top:676px;width:1236px;height:1px;background:#e6e6e6"></div>
<div class="b" style="left:670px;top:677px;width:1236px;height:20px;background:#d3e4e9"></div>
<div class="t" style="left:673px;top:681px;font-size:12px;line-height:14px;color:#000;">ООО &quot;ЛюксСофтОпт&quot;</div>
<div class="b" style="left:670px;top:697px;width:1236px;height:1px;background:#e6e6e6"></div>
<div class="t" style="left:673px;top:702px;font-size:12px;line-height:14px;color:#000;letter-spacing:-0.6px;">ПЕРСПЕКТИВА ООО</div>
<div class="b" style="left:670px;top:718px;width:1236px;height:1px;background:#e6e6e6"></div>
<div class="t" style="left:673px;top:723px;font-size:12px;line-height:14px;color:#000;">ООО &quot;ЛюксСофтТрейд&quot;</div>
<div class="b" style="left:670px;top:739px;width:1236px;height:1px;background:#e6e6e6"></div>
<div class="t" style="left:673px;top:744px;font-size:12px;line-height:14px;color:#000;">ОАО &quot;Веста&quot;</div>
<div class="b" style="left:670px;top:760px;width:1236px;height:1px;background:#e6e6e6"></div>
<div class="t" style="left:673px;top:765px;font-size:12px;line-height:14px;color:#000;">Новая организация</div>
<div class="b" style="left:670px;top:781px;width:1236px;height:1px;background:#e6e6e6"></div>
<div class="t" style="left:673px;top:786px;font-size:12px;line-height:14px;color:#000;">Северторг</div>
<div class="b" style="left:670px;top:802px;width:1236px;height:1px;background:#e6e6e6"></div>
<div class="t" style="left:673px;top:807px;font-size:12px;line-height:14px;color:#000;">Светлогорский филиал</div>
<div class="b" style="left:670px;top:823px;width:1236px;height:1px;background:#e6e6e6"></div>
<div class="t" style="left:673px;top:828px;font-size:12px;line-height:14px;color:#000;">Мстиславское райпо1</div>
<div class="b" style="left:670px;top:844px;width:1236px;height:1px;background:#e6e6e6"></div>
<div class="t" style="left:673px;top:849px;font-size:12px;line-height:14px;color:#000;">Гомельский облпотребсоюз</div>
<div class="b" style="left:670px;top:865px;width:1236px;height:1px;background:#e6e6e6"></div>
<div class="t" style="left:673px;top:870px;font-size:12px;line-height:14px;color:#000;">ООО&quot;ХоДабби&quot;</div>
<div class="b" style="left:670px;top:886px;width:1236px;height:1px;background:#e6e6e6"></div>
<div class="t" style="left:673px;top:891px;font-size:12px;line-height:14px;color:#000;">ерш</div>
<div class="b" style="left:1906px;top:635px;width:9px;height:208px;background:#d9d9d9"></div>
<div class="t" style="left:867px;width:411px;overflow:hidden;top:681px;font-size:12px;line-height:14px;color:#000"><span style="padding-left:5px">Научно-техническое общество с ограниченной ответственностью "ЛЮКС"</span></div>
<svg class="b" style="left:1282px;top:685px" width="30" height="6" viewBox="0 0 30 6" fill="none"><circle cx="2.0" cy="3" r="1.55" fill="#111"/><circle cx="6.75" cy="3" r="1.55" fill="#111"/><circle cx="11.5" cy="3" r="1.55" fill="#111"/><circle cx="16.25" cy="3" r="1.55" fill="#111"/><circle cx="21.0" cy="3" r="1.55" fill="#111"/><circle cx="25.75" cy="3" r="1.55" fill="#111"/></svg>
<div class="t" style="left:1559px;top:681px;font-size:12px;line-height:14px;color:#000;letter-spacing:-0.28px;">(СТТ) ЭЦП REST-сервисы localhost:9090 (на клиенте)</div>
<div class="b" style="left:669px;top:912px;width:22px;height:21px;background:#d3e4e9;border:1px solid #c5d5da;border-radius:3px"></div>
<div class="b" style="left:721px;top:912px;width:1px;height:22px;background:#c8c8c8"></div>
<div class="b" style="left:752px;top:912px;width:1px;height:22px;background:#c8c8c8"></div>
<div class="b" style="left:783px;top:912px;width:1px;height:22px;background:#c8c8c8"></div>
<div class="b" style="left:840px;top:912px;width:1px;height:22px;background:#c8c8c8"></div>
<div class="b" style="left:871px;top:912px;width:1px;height:22px;background:#c8c8c8"></div>
<svg class="b" style="left:660px;top:907px" width="240" height="30" viewBox="660 492 240 30" fill="none"><circle cx="673.8" cy="502.5" r="1.5" stroke="#4dbfee" stroke-width="1"/><path d="M678.5 502.5 H687.8" stroke="#2a2a2a" stroke-width="1.2"/><circle cx="673.8" cy="507.5" r="1.5" stroke="#4dbfee" stroke-width="1"/><path d="M678.5 507.5 H687.8" stroke="#2a2a2a" stroke-width="1.2"/><circle cx="673.8" cy="512.5" r="1.5" stroke="#4dbfee" stroke-width="1"/><path d="M678.5 512.5 H687.8" stroke="#2a2a2a" stroke-width="1.2"/><rect x="698.6" y="500.6" width="15" height="15" stroke="#2a2a2a" stroke-width="1.2"/><path d="M703.9 501.2 V515 M708.8 501.2 V515 M699.2 505.3 H713 M699.2 510.3 H713" stroke="#4dbfee" stroke-width="1"/><path d="M729.3 502.5 H744.6 M733 510.5 H741" stroke="#2a2a2a" stroke-width="1.1"/><path d="M731 506.5 H742.7 M735.7 514.5 H738.4" stroke="#4dbfee" stroke-width="1.1"/><path d="M773.50 507.90 L773.49 508.19 L773.47 508.48 L773.45 508.76 L773.52 509.07 L774.18 509.56 L774.81 510.11 L774.80 510.51 L774.67 510.87 L774.50 511.21 L774.32 511.55 L774.12 511.88 L773.90 512.19 L773.66 512.48 L773.32 512.69 L772.53 512.43 L771.77 512.09 L771.47 512.19 L771.23 512.35 L771.00 512.51 L770.75 512.66 L770.50 512.80 L770.24 512.93 L769.98 513.05 L769.74 513.26 L769.66 514.08 L769.49 514.90 L769.14 515.09 L768.76 515.16 L768.38 515.19 L768.00 515.20 L767.62 515.19 L767.24 515.16 L766.86 515.09 L766.51 514.90 L766.34 514.08 L766.26 513.26 L766.02 513.05 L765.76 512.93 L765.50 512.80 L765.25 512.66 L765.00 512.51 L764.77 512.35 L764.53 512.19 L764.23 512.09 L763.47 512.43 L762.68 512.69 L762.34 512.48 L762.10 512.19 L761.88 511.88 L761.68 511.55 L761.50 511.21 L761.33 510.87 L761.20 510.51 L761.19 510.11 L761.82 509.56 L762.48 509.07 L762.55 508.76 L762.53 508.48 L762.51 508.19 L762.50 507.90 L762.51 507.61 L762.53 507.32 L762.55 507.04 L762.48 506.73 L761.82 506.24 L761.19 505.69 L761.20 505.29 L761.33 504.93 L761.50 504.59 L761.68 504.25 L761.88 503.92 L762.10 503.61 L762.34 503.32 L762.68 503.11 L763.47 503.37 L764.23 503.71 L764.53 503.61 L764.77 503.45 L765.00 503.29 L765.25 503.14 L765.50 503.00 L765.76 502.87 L766.02 502.75 L766.26 502.54 L766.34 501.72 L766.51 500.90 L766.86 500.71 L767.24 500.64 L767.62 500.61 L768.00 500.60 L768.38 500.61 L768.76 500.64 L769.14 500.71 L769.49 500.90 L769.66 501.72 L769.74 502.54 L769.98 502.75 L770.24 502.87 L770.50 503.00 L770.75 503.14 L771.00 503.29 L771.23 503.45 L771.47 503.61 L771.77 503.71 L772.53 503.37 L773.32 503.11 L773.66 503.32 L773.90 503.61 L774.12 503.92 L774.32 504.25 L774.50 504.59 L774.67 504.93 L774.80 505.29 L774.81 505.69 L774.18 506.24 L773.52 506.73 L773.45 507.04 L773.47 507.32 L773.49 507.61 L773.50 507.90 Z" stroke="#2a2a2a" stroke-width="1.1" stroke-linejoin="round"/><circle cx="768" cy="507.9" r="2.4" stroke="#4dbfee" stroke-width="1.2"/><path d="M792.2 501.2 L793.5 500.3 V504.5" stroke="#4dbfee" stroke-width="0.9"/><path d="M792 506.6 Q793.3 505.6 794.3 506.6 Q794.6 507.5 792 510 H794.5" stroke="#4dbfee" stroke-width="0.9"/><path d="M792 511.8 H794.2 L793 513 Q794.8 513.3 794.2 514.8 Q793.3 515.5 792 514.9" stroke="#4dbfee" stroke-width="0.9"/><path d="M797.8 502.5 H807 M797.8 508.5 H807 M797.8 514.5 H807" stroke="#2a2a2a" stroke-width="1.1"/><path d="M817.4 501.5 H832.7 M817.4 505.5 H832.7 M817.4 509.5 H823.5 M817.4 513.5 H822" stroke="#2a2a2a" stroke-width="1.1"/><path d="M829.6 507.8 V515.2 M825.9 511.5 H833.3" stroke="#4dbfee" stroke-width="1.2"/><path d="M853 503.9 H849.4 Q848.4 503.9 848.4 504.9 V514.4 Q848.4 515.4 849.4 515.4 H859.8 Q860.8 515.4 860.8 514.4 V510.5" stroke="#2a2a2a" stroke-width="1.3"/><path d="M855.3 508.2 L863.3 500.5 M858.8 500.5 H863.4 V505" stroke="#4dbfee" stroke-width="1.2"/><path d="M883.5 512.5 H879.2 V503.8 H892.5 M889 500.3 L892.6 503.8 L889 507.3" stroke="#2a2a2a" stroke-width="1.1"/><path d="M891.4 503.8 H894.9 V513 H884.3 M887.8 509.5 L884.2 513 L887.8 516.5" stroke="#4dbfee" stroke-width="1.1"/></svg>
<div class="b" style="left:1747px;top:912px;width:169px;height:22px;background:#fff;border:1px solid #cfcfcf;border-radius:3px"></div>
<div class="t" style="left:1762.5px;top:917px;font-size:12px;line-height:14px;color:#000;">Получить список ключей</div>
<div class="b" style="left:234px;top:938px;width:1683px;height:1px;background:#c9c9c9"></div>
<div class="b" style="left:1497px;top:943px;width:46px;height:22px;background:#fff;border:1px solid #cfcfcf;border-radius:3px"></div>
<svg class="b" style="left:1512px;top:946px" width="16" height="16" viewBox="0 0 16 16" fill="none"><path d="M3 7.5 A5 5 0 0 1 12 4.5" stroke="#222" stroke-width="1.6"/><path d="M13.5 1.5 L13 6.5 L8.5 5.5 Z" fill="#222"/><path d="M13 8.5 A5 5 0 0 1 4 11.5" stroke="#4dbfee" stroke-width="1.6"/><path d="M2.5 14.5 L3 9.5 L7.5 10.5 Z" fill="#4dbfee"/></svg>
<div class="b" style="left:1547px;top:943px;width:104px;height:22px;background:#fff;border:1px solid #cfcfcf;border-radius:3px"></div>
<div class="t" style="left:1578.4px;top:948px;font-size:12px;line-height:14px;color:#8a8a8a;">Сохранить</div>
<svg class="b" style="left:1564px;top:947px" width="12" height="14" viewBox="0 0 12 14" fill="none"><path d="M3 7.5 H9.5 V11.5 H3 Z" fill="#8a8a8a"/><path d="M1.2 3 Q1.2 1.2 3 1.2 H8 L11 4.2 V11 Q11 12.8 9.2 12.8 H3 Q1.2 12.8 1.2 11 Z" stroke="#222" stroke-width="1.5"/></svg>
<div class="b" style="left:1655px;top:943px;width:100px;height:22px;background:#fff;border:1px solid #cfcfcf;border-radius:3px"></div>
<div class="t" style="left:1686px;top:948px;font-size:12px;line-height:14px;color:#8a8a8a;">Отменить</div>
<svg class="b" style="left:1671px;top:946px" width="14" height="15" viewBox="0 0 14 15" fill="none"><path d="M1 3.5 H13" stroke="#555" stroke-width="1"/><path d="M5 3.5 V1.5 H9 V3.5" stroke="#555" stroke-width="1"/><path d="M3.5 5 V13.3 H10.5 V5" stroke="#222" stroke-width="1.4"/></svg>
<div class="b" style="left:1759px;top:943px;width:62px;height:22px;background:#fff;border:1px solid #cfcfcf;border-radius:3px"></div>
<div class="t" style="left:1790px;top:948px;font-size:12px;line-height:14px;color:#000;">OK</div>
<svg class="b" style="left:1775px;top:946px" width="14" height="14" viewBox="0 0 14 14" fill="none"><path d="M1.5 7.5 L5 11.5 L12.5 2" stroke="#222" stroke-width="1.3" fill="none"/></svg>
<div class="b" style="left:1825px;top:943px;width:91px;height:22px;background:#fff;border:1px solid #cfcfcf;border-radius:3px"></div>
<div class="t" style="left:1856px;top:948px;font-size:12px;line-height:14px;color:#000;">Закрыть</div>
<svg class="b" style="left:1843px;top:948px" width="11" height="11" viewBox="0 0 11 11" fill="none"><path d="M1 1 L10 10 M10 1 L1 10" stroke="#222" stroke-width="1.3"/></svg>
<svg class="b" style="left:226.5px;top:172.45px" width="89.10000000000002" height="10.0" viewBox="0 0 89.10000000000002 10.0" fill="none"><path d="M5.0 5.0 L84.10000000000002 5.0" stroke="#fc3b3b" stroke-width="4.7" stroke-linecap="round"/></svg>
<svg class="b" style="left:228.5px;top:321.4px" width="92.0" height="11.0" viewBox="0 0 92.0 11.0" fill="none"><path d="M5.0 5.0 L87.0 6.0" stroke="#fc3b3b" stroke-width="4.9" stroke-linecap="round"/></svg>
<svg class="b" style="left:226.3px;top:438.2px" width="181.7" height="12.100000000000023" viewBox="0 0 181.7 12.100000000000023" fill="none"><path d="M5.0 5.0 L176.7 7.100000000000023" stroke="#fc3b3b" stroke-width="4.8" stroke-linecap="round"/></svg>
<svg class="b" style="left:660.6px;top:171.25px" width="116.69999999999993" height="11.050000000000011" viewBox="0 0 116.69999999999993 11.050000000000011" fill="none"><path d="M5.0 5.0 L111.69999999999993 6.050000000000011" stroke="#fc3b3b" stroke-width="5" stroke-linecap="round"/></svg>
<svg class="b" style="left:657.6px;top:536.4px" width="185.0" height="11.0" viewBox="0 0 185.0 11.0" fill="none"><path d="M5.0 6.0 L180.0 5.0" stroke="#fc3b3b" stroke-width="4.8" stroke-linecap="round"/></svg>
</body></html>
